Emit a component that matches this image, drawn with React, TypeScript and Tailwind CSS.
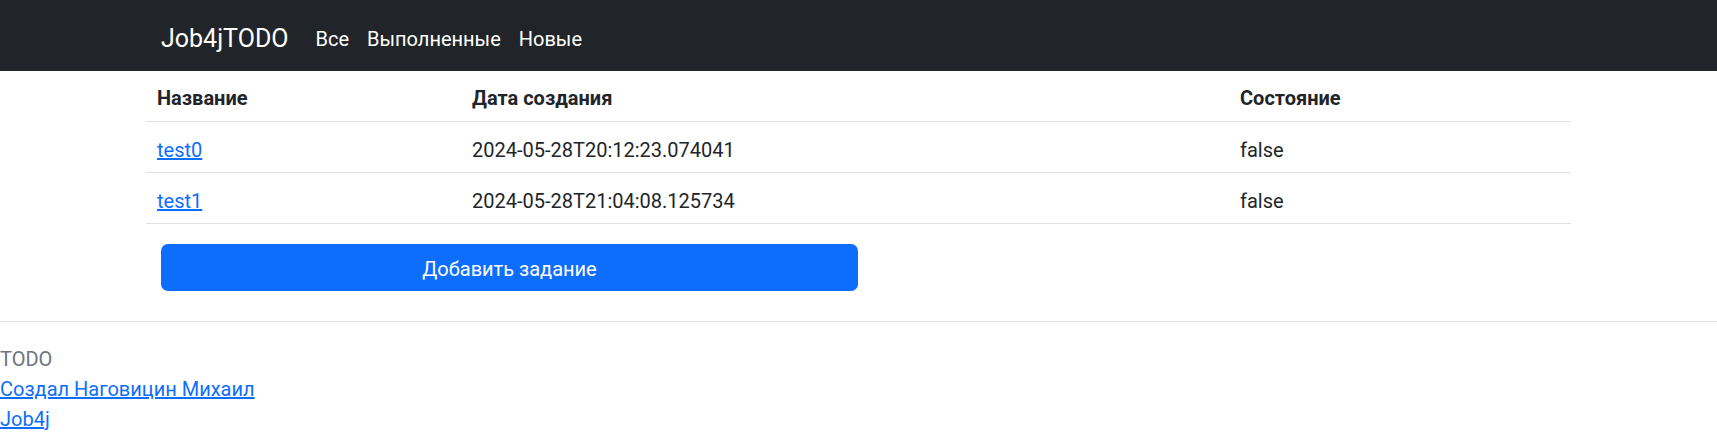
export default function App() {
    const tasks = [
        { name: "test0", created: "2024-05-28T20:12:23.074041", done: "false" },
        { name: "test1", created: "2024-05-28T21:04:08.125734", done: "false" },
    ];
    return (
        <div className="min-h-[436px] bg-white text-[20px] leading-[30px] text-[#212529] font-['Segoe_UI',Roboto,sans-serif]">
            <nav className="h-[71px] bg-[#212529]">
                <div className="mx-auto flex h-full w-[1425px] items-center px-[15px] pt-[6px]">
                    <a href="#" className="mr-[18px] text-[25px] leading-[37px] text-white">Job4jTODO</a>
                    <div className="flex">
                        <a href="#" className="px-[9px] text-white">Все</a>
                        <a href="#" className="px-[9px] text-white">Выполненные</a>
                        <a href="#" className="px-[9px] text-white">Новые</a>
                    </div>
                </div>
            </nav>
            <main className="mx-auto w-[1425px]">
                <table className="w-full border-collapse text-left">
                    <thead>
                        <tr className="border-b border-[#dee2e6]">
                            <th className="w-[315px] px-[11px] pt-[12px] pb-[8px] font-bold">Название</th>
                            <th className="w-[768px] px-[11px] pt-[12px] pb-[8px] font-bold">Дата создания</th>
                            <th className="px-[11px] pt-[12px] pb-[8px] font-bold">Состояние</th>
                        </tr>
                    </thead>
                    <tbody>
                        {tasks.map((t) => (
                            <tr key={t.name} className="border-b border-[#dee2e6]">
                                <td className="px-[11px] pt-[13px] pb-[7px]">
                                    <a href="#" className="text-[#0d6efd] underline">{t.name}</a>
                                </td>
                                <td className="px-[11px] pt-[13px] pb-[7px]">{t.created}</td>
                                <td className="px-[11px] pt-[13px] pb-[7px]">{t.done}</td>
                            </tr>
                        ))}
                    </tbody>
                </table>
                <div className="px-[15px] pt-[20px]">
                    <button
                        type="button"
                        className="h-[47px] w-[697px] rounded-[7px] bg-[#0d6efd] pt-[2px] text-white"
                    >
                        Добавить задание
                    </button>
                </div>
            </main>
            <footer className="mt-[30px] border-t border-[#dee2e6] pt-[22px]">
                <div className="text-[#6c757d]">TODO</div>
                <div><a href="#" className="text-[#0d6efd] underline">Создал Наговицин Михаил</a></div>
                <div><a href="#" className="text-[#0d6efd] underline">Job4j</a></div>
            </footer>
        </div>
    );
}
